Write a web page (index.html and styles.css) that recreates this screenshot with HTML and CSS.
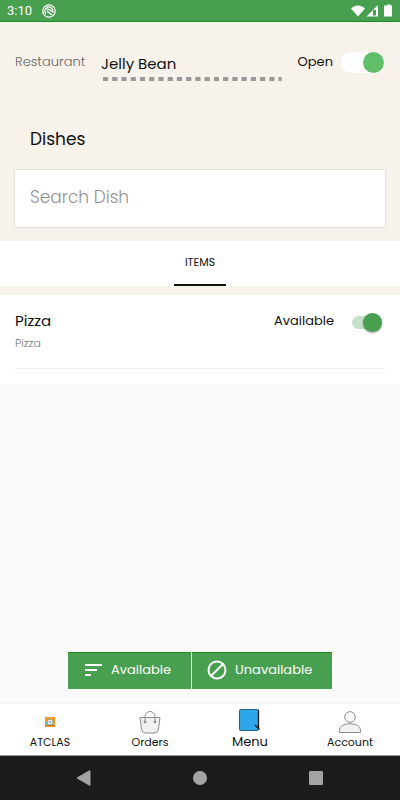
FILE: index.html
```html
<!DOCTYPE html>
<html lang="en">
<head>
<meta charset="utf-8">
<meta name="viewport" content="width=device-width, initial-scale=1">
<title>Menu</title>
<link rel="stylesheet" href="styles.css">
</head>
<body>
<div class="status">
  <span class="clock">3:10</span>
  <svg class="status-app" width="14" height="14" viewBox="0 0 14 14" fill="none" stroke="#fff"><circle cx="7" cy="7" r="6.200" stroke-width="1.200"/><path d="M4 9.800A4 4 0 0 1 9.800 4.200Q11 5.500 10.800 8L7.500 5.500 4.500 5M5 7l5 4" stroke-width="1.300"/></svg>
  <svg class="status-icons" width="42" height="14" viewBox="0 0 42 14" fill="#fff"><path d="M0 4.500C4 .5 10 .5 14 4.500L7 12.500Z"/><path d="M27 1v11.500H15.500Z"/><path d="M22 6h3v5.500h-3z" fill="#489f50"/><path d="M35 1.500h1.500v-1h3v1H41v11h-8v-11z"/></svg>
</div>
<header class="top">
  <div class="restaurant-row">
    <label class="caption" for="restaurant">Restaurant</label>
    <div class="restaurant">
      <input id="restaurant" class="restaurant-name" type="text" value="Jelly Bean">
      <svg class="dots" height="4" viewBox="0 0 179 4" preserveAspectRatio="none"><path d="M0 2H179" pathLength="174" stroke="#999" stroke-width="4" stroke-dasharray="5 4"/></svg>
    </div>
    <label class="open-label" for="open">Open</label>
    <input id="open" class="switch switch-open" type="checkbox" role="switch" checked>
  </div>
  <h1 class="title">Dishes</h1>
  <input class="search" type="search" placeholder="Search Dish" aria-label="Search Dish">
</header>
<div class="tabs"><button class="tab" type="button">ITEMS</button></div>
<main class="content">
  <section class="list">
    <article class="dish">
      <div class="dish-text">
        <h2 class="dish-name">Pizza</h2>
        <p class="dish-kind">Pizza</p>
      </div>
      <label class="available-label" for="available">Available</label>
      <input id="available" class="switch switch-item" type="checkbox" role="switch" checked>
    </article>
  </section>
  <div class="filters">
    <button class="filter" type="button">
      <svg width="18" height="18" viewBox="0 0 18 18" stroke="#fff" stroke-width="2"><path d="M0 4h17M0 9h12M0 14h6"/></svg>
      Available
    </button>
    <button class="filter filter-off" type="button">
      <svg width="20" height="20" viewBox="0 0 20 20" fill="none" stroke="#fff" stroke-width="2"><circle cx="10" cy="10" r="8.5"/><path d="M4 16L16 4"/></svg>
      Unavailable
    </button>
  </div>
</main>
<nav class="nav">
  <a class="nav-item" href="#home">
    <svg width="26" height="24" viewBox="0 0 26 24"><path fill="#f7941e" d="M8 7h10v10H8z"/><path fill="#7fc3a0" d="M9 12l4-4 4 4v3H9z"/><path fill="#eee9ff" d="M11 10h4v4h-4z"/><path fill="#b9a3d8" d="M12 11h2v2h-2z"/><path fill="#d9751a" d="M8 15h10v1H8z"/></svg>
    ATCLAS
  </a>
  <a class="nav-item" href="#orders">
    <svg width="26" height="24" viewBox="0 0 26 24" fill="none" stroke="#8c8c8c"><path d="M3 7.500h20L21.500 19q-.5 4-4 4h-9q-3.500 0-4-4Z" fill="#f1f1f1"/><path d="M8 12V6.500a5 5 0 0 1 10 0V12"/><circle cx="8" cy="12" r="1" fill="#8c8c8c"/><circle cx="18" cy="12" r="1" fill="#8c8c8c"/></svg>
    Orders
  </a>
  <a class="nav-item nav-active" href="#menu" aria-current="page">
    <svg width="26" height="24" viewBox="0 0 26 24" fill="none"><rect x="2.500" y="1.500" width="19" height="21" rx="1" fill="#2ca8ea" stroke="#27607b"/><path d="M21.500 2V21M18 17l4.500 4.500" stroke="#111" stroke-width="1.300"/></svg>
    Menu
  </a>
  <a class="nav-item" href="#account">
    <svg width="26" height="24" viewBox="0 0 26 24" fill="none" stroke="#8c8c8c"><circle cx="13" cy="7" r="5.300"/><path d="M2.500 22.500v-2C2.500 16 7 13.800 13 13.800s10.500 2.200 10.500 6.700v2Z" fill="#f1f1f1"/></svg>
    Account
  </a>
</nav>
<div class="system">
  <button class="system-key" type="button" aria-label="Back"><svg width="16" height="16" viewBox="0 0 16 16" fill="#a3a3a3"><path d="M14 .5v15L1 8Z" stroke="#a3a3a3" stroke-linejoin="round"/></svg></button>
  <button class="system-key" type="button" aria-label="Home"><svg width="16" height="16" viewBox="0 0 16 16" fill="#a3a3a3"><circle cx="8" cy="8" r="7"/></svg></button>
  <button class="system-key" type="button" aria-label="Recent apps"><svg width="16" height="16" viewBox="0 0 16 16" fill="#a3a3a3"><rect x="1" y="1" width="14" height="14" rx="1"/></svg></button>
</div>
</body>
</html>
```
FILE: styles.css
```css
* { box-sizing: border-box; }
body {
  margin: 0;
  min-height: 100vh;
  display: flex;
  flex-direction: column;
  background: #fafafa;
  color: #111;
  font-family: Poppins, Inter, "Open Sans", sans-serif;
  font-weight: 400;
}
h1, h2, p { margin: 0; }
svg { display: block; flex: none; }
button, input { font: inherit; color: inherit; border: 0; padding: 0; margin: 0; }

.status {
  display: flex;
  align-items: center;
  height: 22px;
  padding: 0 7px;
  background: #489f50;
  border-bottom: 1px solid #148f20;
  color: #fff;
}
.clock { padding-top: 1px; font: 13px/20px Roboto, sans-serif; }
.status-app { margin-left: 10px; }
.status-icons { margin-left: auto; }

.top { padding: 28px 15px 14px; background: #f7f2ea; }
.restaurant-row { display: flex; align-items: flex-start; height: 34px; }
.caption { flex: none; width: 86px; font-size: 13px; line-height: 24px; font-weight: 300; color: #666; }
.restaurant { flex: 1; min-width: 0; }
.restaurant-name { display: block; width: 100%; height: 27px; padding-bottom: 1px; font-size: 15px; background: transparent; }
.dots { width: 100%; padding-left: 2px; }
.open-label { margin-left: 16px; font-size: 13px; line-height: 24px; }

.switch { position: relative; flex: none; appearance: none; border-radius: 12px; }
.switch::before { content: ""; position: absolute; border-radius: 50%; }
.switch-open { width: 44px; height: 21px; margin: 2px 0 0 8px; background: #fff; }
.switch-open::before { right: 1px; top: 0; width: 21px; height: 21px; background: #61be69; }
.switch-item { width: 30px; height: 13px; margin: 11px 3px 0 18px; background: #c5e1c9; }
.switch-item::before { right: 0; top: -3px; width: 19px; height: 19px; background: #489f50; box-shadow: 0 1px 2px #0006; }

.title { margin: 42px 15px 18px; font-size: 17px; line-height: 26px; font-weight: 400; }
.search {
  display: block;
  appearance: none;
  width: 100%;
  height: 57px;
  padding: 0 15px 3px;
  font-size: 17px;
  font-weight: 300;
  background: #fff;
  border-radius: 1px;
  box-shadow: 0 0 2px #0004;
}
.search::placeholder { color: #929292; }

.tabs { display: flex; justify-content: center; background: #fff; border-bottom: 9px solid #f7f2ea; }
.tab { width: 52px; height: 45px; font-size: 11px; background: transparent; border-bottom: 2px solid #111; }

.content { flex: 1; display: flex; flex-direction: column; justify-content: space-between; align-items: center; padding-bottom: 13px; }
.list { width: 100%; padding: 0 15px 15px; background: #fff; }
.dish { display: flex; align-items: flex-start; padding-top: 10px; height: 74px; border-bottom: 1px solid #ececec; }
.dish-text { flex: 1; padding-top: 4px; }
.dish-name { font-size: 15px; line-height: 24px; font-weight: 400; }
.dish-kind { font-size: 11px; line-height: 20px; font-weight: 300; color: #777; }
.available-label { padding-top: 4px; font-size: 13px; line-height: 24px; }

.filters { display: flex; gap: 1px; }
.filter {
  display: flex;
  align-items: center;
  gap: 8px;
  width: 123px;
  height: 37px;
  padding: 0 0 2px 17px;
  font-size: 13px;
  color: #fff;
  background: #489f50;
  border-top: 1px solid #148f20;
}
.filter-off { width: 140px; padding-left: 15px; }

.nav { display: flex; background: #fff; border-top: 2px solid #f5f5f5; }
.nav-item {
  flex: 1;
  display: flex;
  flex-direction: column;
  align-items: center;
  padding: 6px 0 5px;
  font-size: 11px;
  line-height: 16px;
  color: #111;
  text-decoration: none;
}
.nav-active { gap: 2px; padding-top: 4px; font-size: 13px; }
.system { display: flex; justify-content: space-between; align-items: center; padding: 0 76px; height: 45px; background: #1b1b1b; border-top: 1px solid #999; }
.system-key { background: transparent; }
```
